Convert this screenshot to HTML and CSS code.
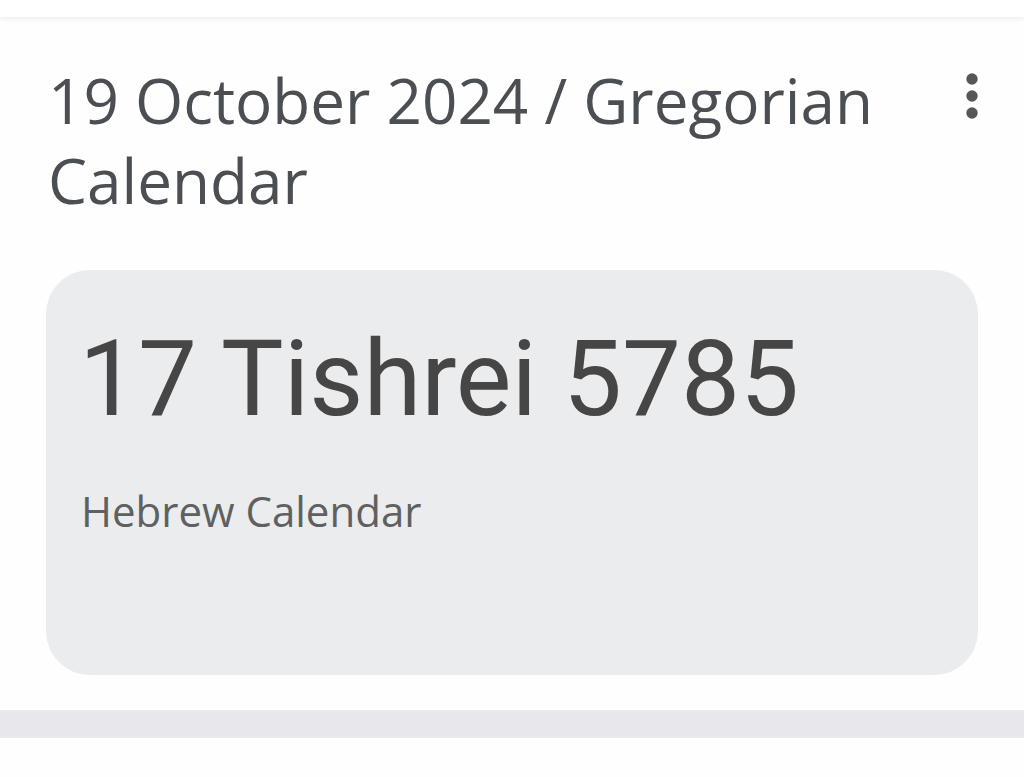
FILE: index.html
```html
<!DOCTYPE html>
<html>
<head>
<meta charset="utf-8">
<link rel="stylesheet" href="styles.css">
</head>
<body>
<div class="topbar"></div>
<div class="header">
  <h1 class="title">19 October 2024 / Gregorian Calendar</h1>
  <div class="kebab" aria-label="More options">
    <svg width="24" height="54" viewBox="0 0 24 54">
      <circle cx="12" cy="10" r="5.7" fill="#55575b"/>
      <circle cx="12" cy="27" r="5.7" fill="#55575b"/>
      <circle cx="12" cy="44" r="5.7" fill="#55575b"/>
    </svg>
  </div>
</div>
<div class="card">
  <div class="card-date">17 Tishrei 5785</div>
  <div class="card-label">Hebrew Calendar</div>
</div>
<div class="divider"></div>
</body>
</html>
```
FILE: styles.css
```css
html, body {
  margin: 0;
  padding: 0;
  background: #fefefe;
}
body {
  width: 1024px;
  height: 777px;
  overflow: hidden;
}
.topbar {
  height: 17px;
  background: #ffffff;
  box-shadow: 0 2px 5px rgba(0, 0, 0, 0.07);
}
.header {
  display: flex;
  justify-content: space-between;
  align-items: flex-start;
  padding: 43px 40px 0 48px;
}
.title {
  margin: 0;
  width: 880px;
  font-family: "Open Sans", sans-serif;
  font-weight: 500;
  font-size: 62px;
  line-height: 80px;
  color: #4b4e53;
}
.kebab {
  padding-top: 9px;
}
.kebab svg {
  display: block;
}
.card {
  margin: 50px 46px 0 46px;
  height: 405px;
  box-sizing: border-box;
  border-radius: 44px;
  background: #ebecee;
  padding: 50px 33px 0 33px;
}
.card-date {
  font-family: Roboto, sans-serif;
  font-size: 105px;
  line-height: 120px;
  color: #464646;
}
.card-label {
  margin-top: 47px;
  padding-left: 2px;
  font-family: "Open Sans", sans-serif;
  font-size: 42px;
  line-height: 48px;
  color: #5f6061;
}
.divider {
  margin-top: 35px;
  height: 28px;
  background: #e8e8ec;
}
```
